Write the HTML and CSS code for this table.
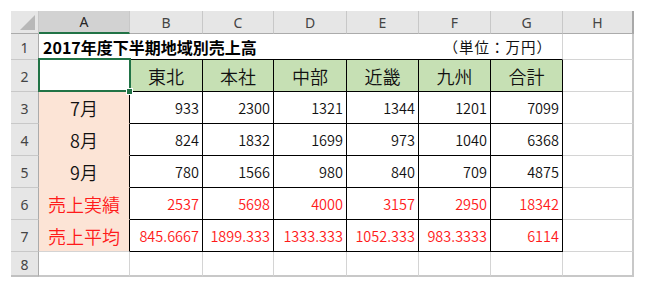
FILE: index.html
```html
<!DOCTYPE html>
<html lang="ja">
<head>
<meta charset="utf-8">
<title>2017年度下半期地域別売上高</title>
<link rel="stylesheet" href="styles.css">
</head>
<body>
<div class="sheet">
  <div class="corner"><span class="tri"></span></div>
  <div class="ch ch-sel">A</div>
  <div class="ch">B</div>
  <div class="ch">C</div>
  <div class="ch">D</div>
  <div class="ch">E</div>
  <div class="ch">F</div>
  <div class="ch">G</div>
  <div class="ch ch-last">H</div>

  <div class="rh">1</div>
  <div class="c title-row"><span class="title">2017年度下半期地域別売上高</span><span class="unit">（単位：万円）</span></div>
  <div class="c last"></div>

  <div class="rh">2</div>
  <div class="c active"><span class="handle"></span></div>
  <div class="c hd">東北</div>
  <div class="c hd">本社</div>
  <div class="c hd">中部</div>
  <div class="c hd">近畿</div>
  <div class="c hd">九州</div>
  <div class="c hd">合計</div>
  <div class="c last"></div>

  <div class="rh">3</div>
  <div class="c lbl">7月</div>
  <div class="c n">933</div>
  <div class="c n">2300</div>
  <div class="c n">1321</div>
  <div class="c n">1344</div>
  <div class="c n">1201</div>
  <div class="c n">7099</div>
  <div class="c last"></div>

  <div class="rh">4</div>
  <div class="c lbl">8月</div>
  <div class="c n">824</div>
  <div class="c n">1832</div>
  <div class="c n">1699</div>
  <div class="c n">973</div>
  <div class="c n">1040</div>
  <div class="c n">6368</div>
  <div class="c last"></div>

  <div class="rh">5</div>
  <div class="c lbl">9月</div>
  <div class="c n">780</div>
  <div class="c n">1566</div>
  <div class="c n">980</div>
  <div class="c n">840</div>
  <div class="c n">709</div>
  <div class="c n">4875</div>
  <div class="c last"></div>

  <div class="rh">6</div>
  <div class="c lbl red">売上実績</div>
  <div class="c n red">2537</div>
  <div class="c n red">5698</div>
  <div class="c n red">4000</div>
  <div class="c n red">3157</div>
  <div class="c n red">2950</div>
  <div class="c n red">18342</div>
  <div class="c last"></div>

  <div class="rh">7</div>
  <div class="c lbl lbl-end red">売上平均</div>
  <div class="c n red">845.6667</div>
  <div class="c n red">1899.333</div>
  <div class="c n red">1333.333</div>
  <div class="c n red">1052.333</div>
  <div class="c n red">983.3333</div>
  <div class="c n red">6114</div>
  <div class="c last"></div>

  <div class="rh rh-bottom">8</div>
  <div class="c bottom"></div>
  <div class="c bottom"></div>
  <div class="c bottom"></div>
  <div class="c bottom"></div>
  <div class="c bottom"></div>
  <div class="c bottom"></div>
  <div class="c bottom"></div>
  <div class="c bottom last"></div>
</div>
</body>
</html>
```

FILE: styles.css
```css
html, body {
  margin: 0;
  padding: 0;
  background: #ffffff;
}

body {
  font-family: "Noto Sans CJK JP", "Noto Sans", sans-serif;
  color: #000000;
}

.sheet {
  margin: 11px 0 0 11px;
  display: grid;
  grid-template-columns: 28px 91px 73px 71px 73px 72px 72px 72px 71px;
  grid-template-rows: 23px 26px repeat(6, 32px) 25px;
  width: 623px;
}

.sheet > div {
  box-sizing: border-box;
  min-width: 0;
  overflow: visible;
}

/* headers */
.corner {
  background: #e6e6e6;
  border-right: 1px solid #c8c8c8;
  border-bottom: 1px solid #ababab;
  position: relative;
}

.tri {
  position: absolute;
  right: 3px;
  bottom: 3px;
  width: 0;
  height: 0;
  border-left: 15px solid transparent;
  border-bottom: 15px solid #b8b8b8;
}

.ch {
  background: #e6e6e6;
  border-right: 1px solid #c8c8c8;
  border-bottom: 1px solid #ababab;
  display: flex;
  align-items: center;
  justify-content: center;
  font-family: "Noto Sans", sans-serif;
  font-size: 14px;
  color: #444444;
  line-height: 1;
  padding-top: 1px;
}

.ch-sel {
  background: #d2d2d2;
  border-bottom: 2px solid #217346;
  color: #262626;
}

.ch-last {
  border-right: 2px solid #a8a8a8;
}

.rh {
  background: #e6e6e6;
  border-right: 1px solid #ababab;
  border-bottom: 1px solid #c8c8c8;
  display: flex;
  align-items: center;
  justify-content: center;
  font-family: "Noto Sans", sans-serif;
  font-size: 14px;
  color: #444444;
  line-height: 1;
  padding-top: 3px;
}

.rh-bottom {
  border-bottom: 2px solid #c0c0c0;
}

/* cells */
.c {
  border-right: 1px solid #d4d4d4;
  border-bottom: 1px solid #d4d4d4;
  display: flex;
  align-items: center;
  line-height: 1;
  white-space: nowrap;
}

.last {
  border-right: 2px solid #c8c8c8;
}

.bottom {
  border-bottom: 2px solid #c8c8c8;
}

.title-row {
  grid-column: 2 / 9;
  justify-content: space-between;
  border-bottom: 1px solid #000000;
  padding: 1px 0 0 4px;
}

.title {
  font-weight: 700;
  font-size: 16px;
}

.unit {
  font-size: 14.5px;
  letter-spacing: 1px;
  padding-right: 10px;
  color: #111111;
}

.active {
  position: relative;
  border-right: 1px solid #000000;
}

.active::after {
  content: "";
  position: absolute;
  left: -1px;
  top: -2px;
  right: -2px;
  bottom: -1px;
  border: 2px solid #217346;
  pointer-events: none;
}

.handle {
  position: absolute;
  right: -4px;
  bottom: -4px;
  width: 5px;
  height: 5px;
  background: #217346;
  border: 1px solid #ffffff;
  z-index: 2;
}

.hd {
  background: #c6e0b4;
  border-right: 1px solid #000000;
  border-bottom: 1px solid #000000;
  justify-content: center;
  font-size: 18px;
  font-weight: 350;
  color: #111111;
  padding-top: 1px;
}

.lbl {
  background: #fce4d6;
  border-right: 1px solid #000000;
  border-bottom: 1px solid #fce4d6;
  justify-content: center;
  font-size: 18px;
  font-weight: 350;
  color: #111111;
  padding-top: 1px;
}

.lbl-end {
  border-bottom-color: #d4d4d4;
}

.n {
  border-right: 1px solid #000000;
  border-bottom: 1px solid #000000;
  justify-content: flex-end;
  padding: 2px 3px 0 0;
  font-size: 14.5px;
  font-weight: 350;
  color: #111111;
}

.red {
  color: #ff1a1a;
}
```
